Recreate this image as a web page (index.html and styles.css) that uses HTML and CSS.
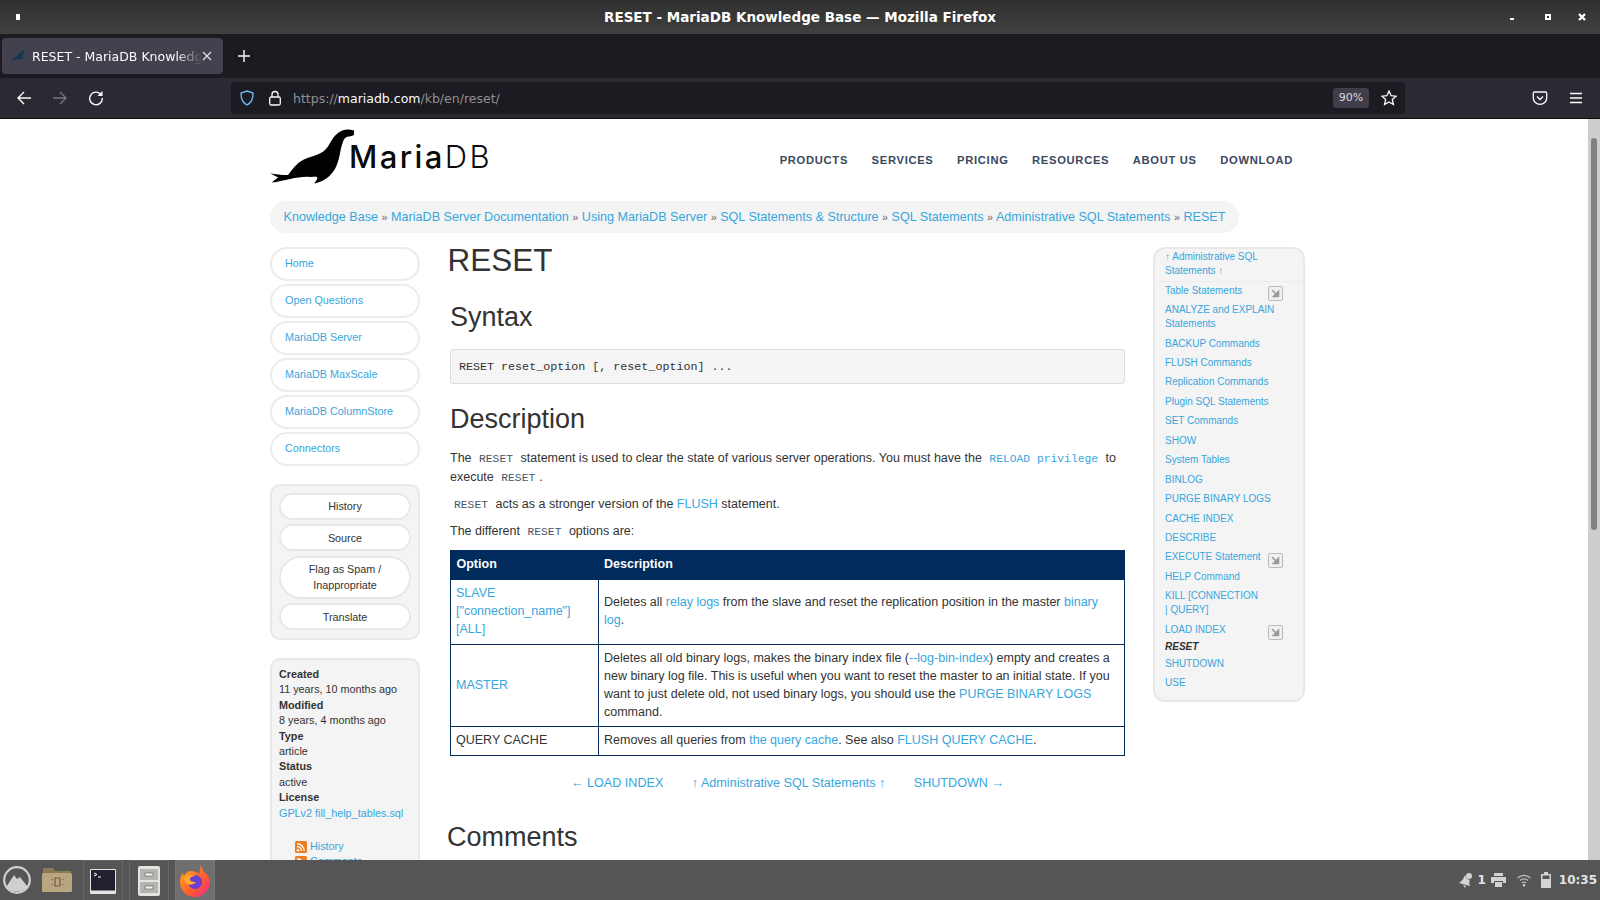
FILE: index.html

```html
<!DOCTYPE html>
<html lang="en">
<head>
  <meta charset="UTF-8" />
  <title>RESET - MariaDB Knowledge Base</title>
  <link rel="stylesheet" href="styles.css">
</head>
<body>

<div class="titlebar">
  <span class="win-pin"></span>
  <span class="win-title">RESET - MariaDB Knowledge Base — Mozilla Firefox</span>
  <div class="win-btns">
    <span class="win-min"></span>
    <span class="win-max"></span>
    <svg class="win-close" width="8" height="8" viewBox="0 0 8 8"><path d="M1 1l6 6M7 1l-6 6" stroke="#fff" stroke-width="2.4"/></svg>
  </div>
</div>

<div class="tabbar">
  <div class="tab">
    <svg class="tab-icon" width="16" height="12" viewBox="0 0 16 12"><path d="M0 11c2-2 5-3 7-5s4-5 8-6c-1 2-2 3-2 5s-1 4-3 5c0-1 0-1-1-1-3 0-6 1-9 2z" fill="#12364d"/></svg>
    <span class="tab-title">RESET - MariaDB Knowledge Base</span>
    <svg class="tab-close" width="10" height="10" viewBox="0 0 10 10"><path d="M1 1l8 8M9 1l-8 8" stroke="#e6e6ea" stroke-width="1.2"/></svg>
  </div>
  <svg class="new-tab" width="12" height="12" viewBox="0 0 12 12"><path d="M6 0v12M0 6h12" stroke="#fbfbfe" stroke-width="1.4"/></svg>
</div>

<div class="toolbar">
  <svg class="tool-btn" width="16" height="16" viewBox="0 0 16 16" fill="none" stroke="#fbfbfe" stroke-width="1.4"><path d="M15 8H2M8 2L2 8l6 6"/></svg>
  <svg class="tool-btn" width="16" height="16" viewBox="0 0 16 16" fill="none" stroke="#77767d" stroke-width="1.4"><path d="M1 8h13M8 2l6 6-6 6"/></svg>
  <svg class="tool-btn" width="16" height="16" viewBox="0 0 16 16" fill="none" stroke="#fbfbfe" stroke-width="1.4"><path d="M13.6 5.5A6.3 6.3 0 1 0 14.3 8"/><path d="M14.5 1v5h-5" fill="#fbfbfe" stroke="none"/></svg>
  <div class="urlbar">
    <svg class="url-shield" width="16" height="16" viewBox="0 0 16 16" fill="none"><path d="M8 1l6 2c.2 5-1.200 9.500-6 12C3.200 12.500 1.800 8 2 3z" stroke="#6fb5f0" stroke-width="1.4"/></svg>
    <svg class="url-lock" width="14" height="16" viewBox="0 0 14 16" fill="none" stroke="#fbfbfe" stroke-width="1.3"><rect x="1.700" y="7" width="10.600" height="8" rx="1.500"/><path d="M4 7V4.500a3 3 0 0 1 6 0V7"/></svg>
    <span class="url-text">https://<b>mariadb.com</b>/kb/en/reset/</span>
    <span class="url-zoom">90%</span>
    <svg class="url-star" width="16" height="16" viewBox="0 0 16 16" fill="none" stroke="#fbfbfe" stroke-width="1.300"><path d="M8 1l2.100 4.700 5 .5-3.800 3.300 1.100 5L8 12l-4.400 2.500 1.100-5L.9 6.200l5-.5z"/></svg>
  </div>
  <svg class="pocket" width="16" height="16" viewBox="0 0 16 16" fill="none" stroke="#fbfbfe" stroke-width="1.300"><path d="M2.500 2h11c.8 0 1.200.5 1.200 1.200V8c0 3.600-3 6.300-6.700 6.300S1.300 11.600 1.300 8V3.200C1.300 2.500 1.700 2 2.500 2z"/><path d="M5 6.500L8 9.500l3-3"/></svg>
  <svg class="hamburger" width="14" height="12" viewBox="0 0 14 12"><path d="M1 1.500h12M1 6h12M1 10.500h12" stroke="#fbfbfe" stroke-width="1.300"/></svg>
</div>

<div class="viewport">
  <div class="page">
    <div class="wrap">
      <header class="site-header">
        <div class="logo">
          <svg class="seal" width="84" height="58" viewBox="270 128 84 58"><path d="M352.700 130.200c-3.500-1.200-7.500-.8-11 .5-4.500 1.800-7.500 5.500-10 9.500-2.500 4-4.500 8.500-8.700 11.500-6 4-14 5-20.500 8.500-5.500 3-9.500 8-14.500 14.800-5.500.2-12-.8-17.800-1.800 2.500 1.500 5.500 3 8 4-2.500 2-4.500 3.700-6.500 5.300 6-.4 12.300-2.300 18.500-3.500 6.500-1.300 13-2.500 19.500-2.100 2.800.2 6.500-.5 7.500.5.500 1.500-1 3.500-3 6 5-1 11-3.200 15.300-7.500 4.500-4.500 7.200-9.500 8.700-15 2-6.500 2.500-14 5-20 1.500-3.500 3.500-4.500 6-4.500 2.500-.2 5.500-1.500 7.500-3.200.5-.8.500-1.800.500-3z" fill="#000"/></svg>
          <span class="logo-text">Maria<span class="logo-db">DB</span></span>
        </div>
        <nav class="site-nav">
          <a>PRODUCTS</a>
          <a>SERVICES</a>
          <a>PRICING</a>
          <a>RESOURCES</a>
          <a>ABOUT US</a>
          <a>DOWNLOAD</a>
        </nav>
      </header>

      <div class="crumbs">
        <a>Knowledge Base</a> <i>»</i> <a>MariaDB Server Documentation</a> <i>»</i> <a>Using MariaDB Server</a> <i>»</i> <a>SQL Statements &amp; Structure</a> <i>»</i> <a>SQL Statements</a> <i>»</i> <a>Administrative SQL Statements</a> <i>»</i> <a>RESET</a>
      </div>

      <div class="columns">
        <aside class="left">
          <ul class="pills">
            <li><a>Home</a></li>
            <li><a>Open Questions</a></li>
            <li><a>MariaDB Server</a></li>
            <li><a>MariaDB MaxScale</a></li>
            <li><a>MariaDB ColumnStore</a></li>
            <li><a>Connectors</a></li>
          </ul>

          <div class="box actions">
            <a class="action">History</a>
            <a class="action">Source</a>
            <a class="action action-tall">Flag as Spam /<br>Inappropriate</a>
            <a class="action">Translate</a>
          </div>

          <div class="box info">
            <dl>
              <dt>Created</dt><dd>11 years, 10 months ago</dd>
              <dt>Modified</dt><dd>8 years, 4 months ago</dd>
              <dt>Type</dt><dd>article</dd>
              <dt>Status</dt><dd>active</dd>
              <dt>License</dt><dd><a>GPLv2 fill_help_tables.sql</a></dd>
            </dl>
            <div class="feeds">
              <div class="feed"><svg width="12" height="12" viewBox="0 0 12 12"><rect width="12" height="12" rx="1.500" fill="#ee7b21"/><circle cx="3" cy="9.200" r="1.300" fill="#fff"/><path d="M2 5.500a4.500 4.500 0 0 1 4.500 4.500M2 2.800A7.200 7.200 0 0 1 9.200 10" fill="none" stroke="#fff" stroke-width="1.400"/></svg><a>History</a></div>
              <div class="feed"><svg width="12" height="12" viewBox="0 0 12 12"><rect width="12" height="12" rx="1.500" fill="#ee7b21"/><circle cx="3" cy="9.200" r="1.300" fill="#fff"/><path d="M2 5.500a4.500 4.500 0 0 1 4.500 4.500M2 2.800A7.200 7.200 0 0 1 9.200 10" fill="none" stroke="#fff" stroke-width="1.400"/></svg><a>Comments</a></div>
            </div>
          </div>
        </aside>

        <main class="main">
          <h1>RESET</h1>
          <h2>Syntax</h2>
          <pre class="syntax">RESET reset_option [, reset_option] ...</pre>
          <h2 class="desc-head">Description</h2>
          <p>The <code>RESET</code> statement is used to clear the state of various server operations. You must have the <a><code class="code-link">RELOAD privilege</code></a> to execute <code>RESET</code>.</p>
          <p><code>RESET</code> acts as a stronger version of the <a>FLUSH</a> statement.</p>
          <p>The different <code>RESET</code> options are:</p>

          <table class="options">
            <thead>
              <tr><th class="col-opt">Option</th><th>Description</th></tr>
            </thead>
            <tbody>
              <tr>
                <td><a>SLAVE ["connection_name"] [ALL]</a></td>
                <td>Deletes all <a>relay logs</a> from the slave and reset the replication position in the master <a>binary log</a>.</td>
              </tr>
              <tr>
                <td><a>MASTER</a></td>
                <td>Deletes all old binary logs, makes the binary index file (<a>--log-bin-index</a>) empty and creates a new binary log file. This is useful when you want to reset the master to an initial state. If you want to just delete old, not used binary logs, you should use the <a>PURGE BINARY LOGS</a> command.</td>
              </tr>
              <tr>
                <td>QUERY CACHE</td>
                <td>Removes all queries from <a>the query cache</a>. See also <a>FLUSH QUERY CACHE</a>.</td>
              </tr>
            </tbody>
          </table>

          <div class="prevnext">
            <a>← LOAD INDEX</a>
            <a>↑ Administrative SQL Statements ↑</a>
            <a>SHUTDOWN →</a>
          </div>

          <h2 class="comments-head">Comments</h2>
        </main>

        <aside class="box toc">
          <a class="toc-up">↑ Administrative SQL<br>Statements ↑</a>
          <a class="toc-item">Table Statements<span class="expand"><svg width="9" height="9" viewBox="0 0 9 9"><path d="M1 1l5 5M7.500 2.500v5h-5z" stroke="#999" stroke-width="1.600" fill="#999"/></svg></span></a>
          <a class="toc-item">ANALYZE and EXPLAIN<br>Statements</a>
          <a class="toc-item">BACKUP Commands</a>
          <a class="toc-item">FLUSH Commands</a>
          <a class="toc-item">Replication Commands</a>
          <a class="toc-item">Plugin SQL Statements</a>
          <a class="toc-item">SET Commands</a>
          <a class="toc-item">SHOW</a>
          <a class="toc-item">System Tables</a>
          <a class="toc-item">BINLOG</a>
          <a class="toc-item">PURGE BINARY LOGS</a>
          <a class="toc-item">CACHE INDEX</a>
          <a class="toc-item">DESCRIBE</a>
          <a class="toc-item">EXECUTE Statement<span class="expand"><svg width="9" height="9" viewBox="0 0 9 9"><path d="M1 1l5 5M7.500 2.500v5h-5z" stroke="#999" stroke-width="1.600" fill="#999"/></svg></span></a>
          <a class="toc-item">HELP Command</a>
          <a class="toc-item">KILL [CONNECTION<br>| QUERY]</a>
          <a class="toc-item load-index">LOAD INDEX<span class="expand"><svg width="9" height="9" viewBox="0 0 9 9"><path d="M1 1l5 5M7.500 2.500v5h-5z" stroke="#999" stroke-width="1.600" fill="#999"/></svg></span></a>
          <strong class="toc-current">RESET</strong>
          <a class="toc-item">SHUTDOWN</a>
          <a class="toc-item">USE</a>
        </aside>
      </div>
    </div>
  </div>
  <div class="scrollbar"><div class="thumb"></div></div>
</div>

<div class="taskbar">
  <svg class="start" width="28" height="28" viewBox="0 0 28 28"><circle cx="14" cy="14" r="12.800" fill="none" stroke="#cfcfcf" stroke-width="2.200"/><path d="M3.500 20.500L11 9l3 4 3-2 7.500 9.500c-2 3-6 5-10.500 5s-8.500-2-10.500-5z" fill="#cfcfcf"/></svg>
  <svg class="folder" width="30" height="26" viewBox="0 0 30 26"><path d="M1 1h10l2 3h16v21H1z" fill="#8d7a57"/><rect x="0" y="6" width="30" height="19" rx="1.500" fill="#b9a57f"/><path d="M13 11h5v8h-5zM10 12v1M10 17v1M21 12v1M21 17v1" fill="none" stroke="#6e5f42" stroke-width="1.200"/></svg>
  <div class="cell">
    <svg width="26" height="26" viewBox="0 0 26 26"><rect x="0" y="1" width="26" height="25" rx="1" fill="#e5e5e5"/><rect x="1" y="2" width="24" height="20.500" fill="#221f2e"/><path d="M4 5l3 1.500L4 8M8 9h3" stroke="#fff" stroke-width="1" fill="none"/></svg>
  </div>
  <div class="cell">
    <svg width="22" height="30" viewBox="0 0 22 30"><rect x="0" y="0" width="22" height="30" rx="2" fill="#e4e3df"/><rect x="2" y="3" width="18" height="11" fill="#b5b5b0"/><rect x="2" y="16" width="18" height="11" fill="#b5b5b0"/><rect x="7" y="7" width="8" height="3" fill="#f2f2f0" stroke="#555" stroke-width=".6"/><rect x="7" y="20" width="8" height="3" fill="#f2f2f0" stroke="#555" stroke-width=".6"/></svg>
  </div>
  <div class="cell cell-active">
    <svg width="32" height="32" viewBox="0 0 32 32">
      <defs>
        <linearGradient id="fx" x1="0" y1="0" x2="1" y2="1"><stop offset="0" stop-color="#ffb01f"/><stop offset=".6" stop-color="#ff5b30"/><stop offset="1" stop-color="#f0229a"/></linearGradient>
      </defs>
      <path d="M21 0c3 3 3 5 3 6 4 3 7 7 7 11 0 8-7 15-15 15S1 26 1 17c0-4 1-7 3-9l1 3c1-3 4-5 7-5 3 0 6 1 8 3 1-3 2-6 1-9z" fill="url(#fx)"/>
      <circle cx="16" cy="17" r="7" fill="#6a3fd0"/>
      <path d="M5 13c3-3 8-4 12-2-3 0-6 1-6 3 0 3 4 3 6 3-3 4-9 3-11 0z" fill="#ffab2a"/>
    </svg>
  </div>
  <div class="tray">
    <svg width="16" height="16" viewBox="0 0 16 16"><circle cx="11" cy="4" r="3" fill="#d3d3d3"/><path d="M7 3c-1 3-3 6-6 8l11 3c-1-2-1-5 0-6l-3-1zM5 13l3 1-1 2z" fill="#d3d3d3"/></svg>
    <span class="tray-num">1</span>
    <svg class="tray-print" width="15" height="14" viewBox="0 0 15 14"><path d="M3 0h9v3H3zM1 4h13c.6 0 1 .4 1 1v5h-3V8H3v2H0V5c0-.6.4-1 1-1zM4 9h7v5H4z" fill="#d3d3d3"/></svg>
    <svg class="tray-wifi" width="14" height="14" viewBox="0 0 14 14" fill="none" stroke="#bdbdbd" stroke-width="1.300"><path d="M.5 5a9.200 9.200 0 0 1 13 0M3 7.500a5.700 5.700 0 0 1 8 0M5 10a2.800 2.800 0 0 1 4 0"/><circle cx="7" cy="12.300" r="1.200" fill="#d3d3d3" stroke="none"/></svg>
    <svg class="tray-batt" width="12" height="16" viewBox="0 0 12 16"><path d="M4 0h4v2h3v14H1V2h3z" fill="#d3d3d3"/><rect x="2.500" y="3.500" width="7" height="3.500" fill="#555"/></svg>
    <span class="clock">10:35</span>
  </div>
</div>

</body>
</html>
```

FILE: styles.css

```css
* {
  box-sizing: border-box;
}
html, body {
  margin: 0;
  height: 100%;
  overflow: hidden;
}
body {
  display: flex;
  flex-direction: column;
  height: 900px;
  font-family: "Liberation Sans", Arial, sans-serif;
  font-size: 12.600px;
  color: #333;
  background: #fff;
}

/* window title */
.titlebar {
  height: 34px;
  flex: none;
  position: relative;
  display: flex;
  align-items: center;
  justify-content: center;
  background: linear-gradient(#303030, #404040);
}
.win-pin {
  position: absolute;
  left: 16px;
  top: 14px;
  width: 4px;
  height: 6px;
  background: #fff;
}
.win-title {
  font-family: "DejaVu Sans", sans-serif;
  font-weight: 700;
  font-size: 13.500px;
  color: #fff;
}
.win-btns {
  position: absolute;
  right: 0;
  top: 0;
  height: 34px;
}
.win-min {
  position: absolute;
  right: 86px;
  top: 18px;
  width: 4px;
  height: 2px;
  background: #fff;
}
.win-max {
  position: absolute;
  right: 49px;
  top: 14px;
  width: 6px;
  height: 6px;
  border: 2px solid #fff;
}
.win-close {
  position: absolute;
  right: 14px;
  top: 13px;
}

/* tab strip */
.tabbar {
  height: 44px;
  flex: none;
  display: flex;
  align-items: center;
  background: #1c1b22;
  padding-left: 2px;
}
.tab {
  width: 221px;
  height: 36px;
  display: flex;
  align-items: center;
  background: #42414d;
  border-radius: 4px;
  padding-left: 8px;
  position: relative;
}
.tab-icon {
  flex: none;
}
.tab-title {
  font-family: "DejaVu Sans", sans-serif;
  font-size: 12.500px;
  color: #fbfbfe;
  margin-left: 6px;
  width: 170px;
  overflow: hidden;
  white-space: nowrap;
  -webkit-mask-image: linear-gradient(to right, #000 85%, transparent);
  mask-image: linear-gradient(to right, #000 85%, transparent);
}
.tab-close {
  position: absolute;
  right: 11px;
  top: 13px;
}
.new-tab {
  margin-left: 15px;
}

/* nav toolbar */
.toolbar {
  height: 41px;
  flex: none;
  display: flex;
  align-items: center;
  background: #2b2a33;
  border-bottom: 1px solid #0c0c0d;
  padding-left: 16px;
}
.tool-btn {
  margin-right: 20px;
  flex: none;
}
.urlbar {
  width: 1174px;
  height: 32px;
  margin-left: 107px;
  display: flex;
  align-items: center;
  background: #1c1b22;
  border-radius: 4px;
  padding-left: 8px;
  padding-right: 8px;
}
.url-lock {
  margin-left: 13px;
}
.url-text {
  font-family: "DejaVu Sans", sans-serif;
  font-size: 12.500px;
  color: #8f8f94;
  margin-left: 11px;
}
.url-text b {
  font-weight: 400;
  color: #fbfbfe;
}
.url-zoom {
  margin-left: auto;
  width: 36px;
  height: 20px;
  border-radius: 3px;
  background: #3f3e4a;
  color: #dcdce2;
  font-family: "DejaVu Sans", sans-serif;
  font-size: 11px;
  line-height: 20px;
  text-align: center;
}
.url-star {
  margin-left: 12px;
}
.pocket {
  margin-left: 127px;
}
.hamburger {
  margin-left: 21px;
}

/* page area */
.viewport {
  flex: 1;
  min-height: 0;
  display: flex;
  background: #fff;
}
.page {
  flex: 1;
  min-width: 0;
  overflow: hidden;
}
.scrollbar {
  width: 12px;
  flex: none;
  background: #cdcdcd;
  padding: 19px 3px 0;
}
.thumb {
  height: 392px;
  background: #7f8180;
  border-radius: 3px;
}
.wrap {
  width: 1048px;
  margin: 0 auto;
}
a {
  color: #37a6dd;
  text-decoration: none;
}

.site-header {
  height: 82px;
  display: flex;
  padding-top: 9px;
  padding-right: 25px;
}
.logo {
  display: flex;
  align-items: flex-start;
}
.logo-text {
  font-family: Inter, sans-serif;
  font-weight: 500;
  font-size: 31px;
  line-height: 34px;
  margin-top: 12px;
  margin-left: -5px;
  letter-spacing: 2.400px;
  color: #0a0a0a;
}
.logo-db {
  font-weight: 300;
}
.site-nav {
  margin-left: auto;
  padding-top: 26px;
  display: flex;
  gap: 23.500px;
}
.site-nav a {
  font-size: 11.200px;
  font-weight: 700;
  letter-spacing: .7px;
  color: #3a4860;
}

.crumbs {
  display: inline-block;
  height: 32px;
  line-height: 32px;
  padding: 0 13.500px;
  border-radius: 16px;
  background: #f4f4f4;
  font-size: 12.600px;
  white-space: nowrap;
}
.crumbs i {
  font-style: normal;
  font-size: 10.800px;
  color: #666;
}

.columns {
  display: grid;
  grid-template-columns: 150px 675px 150px;
  column-gap: 30px;
  margin-top: 14px;
  align-items: start;
}

/* left side */
.pills {
  list-style: none;
  margin: 0;
  padding: 0;
  display: flex;
  flex-direction: column;
  gap: 3px;
}
.pills li {
  height: 34px;
  border: 2px solid #ececec;
  border-radius: 17px;
  padding-left: 13px;
  font-size: 10.800px;
  line-height: 28px;
}
.box {
  background: #f4f4f4;
  border: 2px solid #e8e8e8;
  border-radius: 10px;
}
.actions {
  margin-top: 18px;
  height: 156px;
  padding: 6.500px 7px 0;
  display: flex;
  flex-direction: column;
  gap: 4.500px;
}
.action {
  display: block;
  background: #fff;
  border: 2px solid #e8e8e8;
  border-radius: 14px;
  color: #333;
  font-size: 10.800px;
  line-height: 16px;
  padding: 3.500px 0;
  text-align: center;
}
.action-tall {
  border-radius: 22px;
}
.info {
  margin-top: 18px;
  height: 260px;
  padding: 7px 7px;
  font-size: 10.800px;
  line-height: 15.400px;
}
.info dl {
  margin: 0;
}
.info dd {
  margin: 0;
}
.info dt {
  font-weight: 700;
}
.feeds {
  margin-top: 18px;
  padding-left: 16px;
}
.feed {
  display: flex;
  align-items: center;
  gap: 3px;
}

/* article */
.main h1 {
  font-size: 31.500px;
  font-weight: 400;
  line-height: 36px;
  margin: -5px 0 0 -2.500px;
}
.main h2 {
  font-size: 27px;
  font-weight: 400;
  line-height: 32px;
  margin: 23px 0 0;
}
.syntax {
  height: 35px;
  margin: 16px 0 0;
  padding: 0 8px;
  background: #f5f5f5;
  border: 1px solid #ddd;
  border-radius: 3px;
  font-family: "Liberation Mono", monospace;
  font-size: 11.700px;
  line-height: 35px;
}
.main .desc-head {
  margin-top: 19px;
}
.main p {
  margin: 0;
  font-size: 12.500px;
  line-height: 18px;
}
.main p:first-of-type {
  margin-top: 14px;
}
.main p + p {
  margin-top: 8px;
}
code {
  font-family: "Liberation Mono", monospace;
  font-size: 11.340px;
  color: #4a5568;
  padding: 0 4px;
}
.code-link {
  color: #37a6dd;
}
.options {
  width: 675px;
  margin-top: 9px;
  border-collapse: collapse;
  border: 1px solid #002b5c;
  font-size: 12.500px;
  line-height: 18px;
}
.options th {
  background: #002b5c;
  color: #fff;
  text-align: left;
  height: 29px;
  padding: 0 5.500px 2px;
}
.col-opt {
  width: 148px;
}
.options td {
  border: 1px solid #002b5c;
  padding: 4px 5px 5.500px;
}
.prevnext {
  display: flex;
  justify-content: center;
  gap: 28.500px;
  margin-top: 20px;
}
.main .comments-head {
  margin: 31px 0 0 -3px;
  font-size: 27px;
}

/* right side */
.toc {
  height: 455px;
  margin-left: -2px;
  padding: 1px 10px 0;
  font-size: 10px;
  line-height: 14px;
  border-radius: 12px;
}
.toc-up {
  display: block;
  margin: 0 -10px -1px;
  padding: 0 10px 3px;
  border-bottom: 1px solid #ececec;
}
.toc-item {
  display: block;
  position: relative;
  padding: 2.720px 0;
}
.expand {
  position: absolute;
  right: 10px;
  top: 5px;
  width: 15px;
  height: 15px;
  border: 1px solid #bbb;
  border-radius: 2px;
  background: #f0f0f0;
  display: flex;
  align-items: center;
  justify-content: center;
}
.load-index {
  padding-top: 3px;
  padding-bottom: 0;
}
.toc-current {
  display: block;
  font-style: italic;
  line-height: 14px;
  padding-top: 3px;
  color: #333;
}

/* desktop panel */
.taskbar {
  height: 40px;
  flex: none;
  display: flex;
  align-items: center;
  background: #555;
}
.start {
  margin-left: 3px;
}
.folder {
  margin-left: 11px;
  margin-right: 11px;
}
.cell {
  width: 40px;
  height: 40px;
  margin-right: 6px;
  display: flex;
  align-items: center;
  justify-content: center;
  border: 1px solid #666;
  border-bottom: 0;
}
.cell-active {
  background: #6f6f6f;
  border-color: #777;
}
.tray {
  margin-left: auto;
  display: flex;
  align-items: center;
  padding-right: 3px;
}
.tray-num,
.clock {
  font-family: "DejaVu Sans", sans-serif;
  font-weight: 700;
  font-size: 12px;
  color: #e4e4e4;
}
.tray-num {
  margin-left: 3px;
}
.tray-print {
  margin-left: 5px;
}
.tray-wifi {
  margin-left: 11px;
}
.tray-batt {
  margin-left: 9px;
}
.clock {
  margin-left: 7px;
}
```
